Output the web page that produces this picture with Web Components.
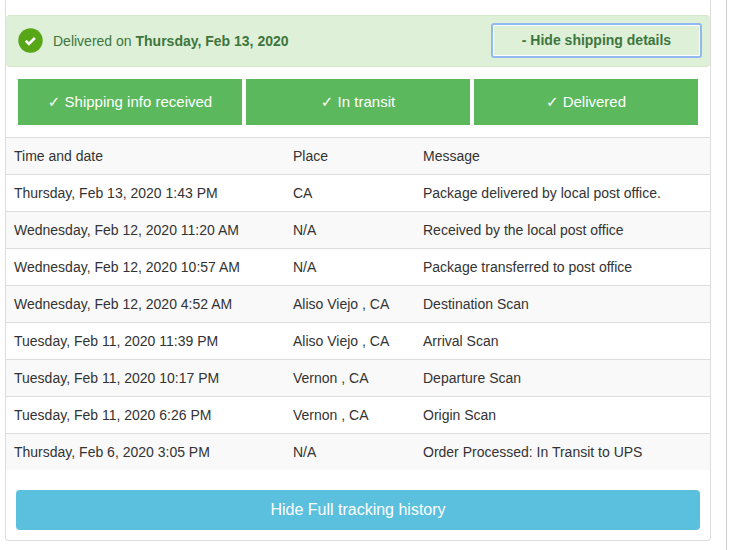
<!DOCTYPE html>
<html lang="en">
<head>
<meta charset="utf-8">
<title>Shipping details</title>
<style>
body { margin: 0; background: #fff; color: #333; font: 14px/20px "Liberation Sans", Arial, sans-serif; }
</style>
</head>
<body>
<tracking-page>
  <tracking-card>
    <delivery-status slot="status">Delivered on <strong>Thursday, Feb 13, 2020</strong></delivery-status>
    <progress-steps slot="steps">
      <progress-step>Shipping info received</progress-step>
      <progress-step>In transit</progress-step>
      <progress-step>Delivered</progress-step>
    </progress-steps>
    <tracking-history></tracking-history>
    <history-toggle slot="footer">Hide Full tracking history</history-toggle>
  </tracking-card>
</tracking-page>
<script>
function define(name, markup, setup) {
  customElements.define(name, class extends HTMLElement {
    constructor() {
      super();
      const root = this.attachShadow({ mode: 'open' });
      const template = document.createElement('template');
      template.innerHTML = markup;
      root.append(template.content.cloneNode(true));
      if (setup) setup(root);
    }
  });
}

define('tracking-page', `
<style>
:host { display: block; box-sizing: border-box; min-height: 100vh; margin-right: 8px; padding: 0 15px 9px 5px; border-right: 1px solid #ccc; }
</style><slot></slot>`);

define('tracking-card', `
<style>
:host { display: block; border: 1px solid #ddd; border-top: 0; border-radius: 0 0 4px 4px; padding-top: 15px; }
.steps { padding: 12px; }
.footer { padding: 20px 10px 10px; }
</style>
<slot name="status"></slot>
<div class="steps"><slot name="steps"></slot></div>
<slot></slot>
<div class="footer"><slot name="footer"></slot></div>`);

define('delivery-status', `
<style>
:host { display: flex; align-items: center; justify-content: space-between; gap: 10px; background: #dff0d8; color: #3c763d; border: 1px solid #d6e9c6; border-width: 1px 0; border-radius: 4px; padding: 7px 8px 8px 12px; }
.status { display: flex; align-items: center; gap: 10px; }
svg { width: 25px; height: 25px; flex: none; }
button { flex: none; width: 211px; height: 35px; padding: 0 0 1px; border: 2px solid #92b8f0; border-radius: 3px; box-shadow: inset 0 0 0 1px #fff; background: #dff0d8; color: inherit; font: inherit; font-weight: bold; cursor: pointer; }
</style>
<div class="status">
<svg viewBox="0 0 25 25" aria-hidden="true"><circle cx="12.500" cy="12.500" r="12.200" fill="#56a618"/><path d="M7.800 12.800l3.100 3.100 6-6" fill="none" stroke="#fff" stroke-width="2.700"/></svg>
<div><slot></slot></div>
</div>
<button type="button" aria-expanded="true">- Hide shipping details</button>`);

define('progress-steps', `
<style>:host { display: grid; grid-template-columns: repeat(3, 1fr); gap: 4px; }</style><slot></slot>`);

define('progress-step', `
<style>
:host { display: block; padding: 13px 4px; background: #5cb85c; color: #fff; font-size: 15px; text-align: center; font-family: "Liberation Sans", Arial, "DejaVu Sans", sans-serif; }
</style>&#10003; <slot></slot>`);

const events = [
  ['Thursday, Feb 13, 2020 1:43 PM', 'CA', 'Package delivered by local post office.'],
  ['Wednesday, Feb 12, 2020 11:20 AM', 'N/A', 'Received by the local post office'],
  ['Wednesday, Feb 12, 2020 10:57 AM', 'N/A', 'Package transferred to post office'],
  ['Wednesday, Feb 12, 2020 4:52 AM', 'Aliso Viejo , CA', 'Destination Scan'],
  ['Tuesday, Feb 11, 2020 11:39 PM', 'Aliso Viejo , CA', 'Arrival Scan'],
  ['Tuesday, Feb 11, 2020 10:17 PM', 'Vernon , CA', 'Departure Scan'],
  ['Tuesday, Feb 11, 2020 6:26 PM', 'Vernon , CA', 'Origin Scan'],
  ['Thursday, Feb 6, 2020 3:05 PM', 'N/A', 'Order Processed: In Transit to UPS']
];

define('tracking-history', `
<style>
:host { display: block; }
table { width: 100%; border-collapse: separate; border-spacing: 0; }
th, td { padding: 8px; border-top: 1px solid #ddd; text-align: left; font-weight: normal; }
th:first-child { width: 263px; }
th:nth-child(2) { width: 114px; }
thead tr, tbody tr:nth-child(even) { background: #f9f9f9; }
</style>
<table>
<thead><tr><th scope="col">Time and date</th><th scope="col">Place</th><th scope="col">Message</th></tr></thead>
<tbody></tbody>
</table>`, root => {
  const body = root.querySelector('tbody');
  for (const event of events) {
    const row = body.insertRow();
    for (const text of event) row.insertCell().textContent = text;
  }
});

define('history-toggle', `
<style>
:host { display: block; }
button { display: block; width: 100%; padding: 10px; border: 0; border-radius: 4px; background: #5bc0de; color: #fff; font: inherit; font-size: 16px; line-height: 20px; cursor: pointer; }
</style>
<button type="button"><slot></slot></button>`);
</script>
</body>
</html>
